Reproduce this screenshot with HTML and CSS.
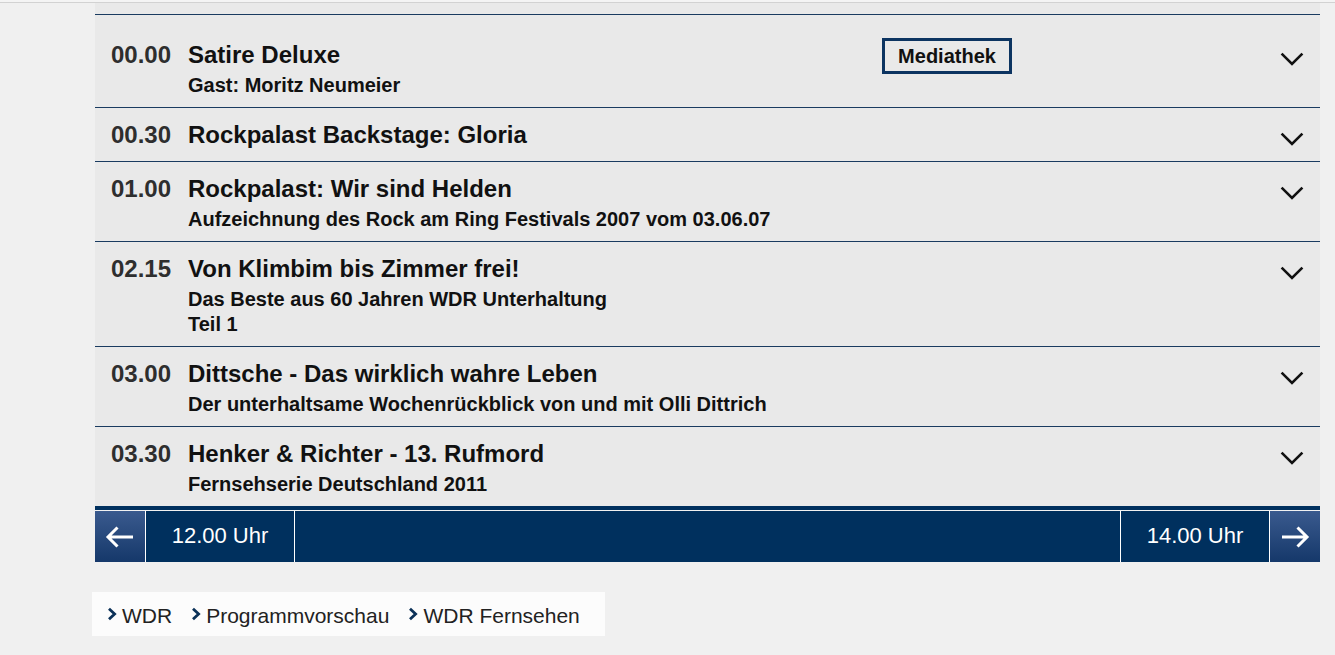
FILE: index.html
```html
<!DOCTYPE html>
<html lang="de">
<head>
<meta charset="utf-8">
<title>WDR Fernsehen – Programmvorschau</title>
<link rel="stylesheet" href="styles.css">
</head>
<body>
<div class="topline"></div>
<main class="page">
  <div class="prev"></div>
  <ul class="schedule">
    <li class="item">
      <span class="time">00.00</span>
      <div class="info">
        <div class="title">Satire Deluxe</div>
        <div class="sub">Gast: Moritz Neumeier</div>
      </div>
      <div class="media"><a class="mediathek" href="#">Mediathek</a></div>
      <div class="toggle"><svg class="chev" width="24" height="14" viewBox="0 0 24 14"><path d="M1.6 1.6 L12 12 L22.4 1.6"/></svg></div>
    </li>
    <li class="item">
      <span class="time">00.30</span>
      <div class="info">
        <div class="title">Rockpalast Backstage: Gloria</div>
      </div>
      <div class="toggle"><svg class="chev" width="24" height="14" viewBox="0 0 24 14"><path d="M1.6 1.6 L12 12 L22.4 1.6"/></svg></div>
    </li>
    <li class="item">
      <span class="time">01.00</span>
      <div class="info">
        <div class="title">Rockpalast: Wir sind Helden</div>
        <div class="sub">Aufzeichnung des Rock am Ring Festivals 2007 vom 03.06.07</div>
      </div>
      <div class="toggle"><svg class="chev" width="24" height="14" viewBox="0 0 24 14"><path d="M1.6 1.6 L12 12 L22.4 1.6"/></svg></div>
    </li>
    <li class="item">
      <span class="time">02.15</span>
      <div class="info">
        <div class="title">Von Klimbim bis Zimmer frei!</div>
        <div class="sub">Das Beste aus 60 Jahren WDR Unterhaltung<br>Teil 1</div>
      </div>
      <div class="toggle"><svg class="chev" width="24" height="14" viewBox="0 0 24 14"><path d="M1.6 1.6 L12 12 L22.4 1.6"/></svg></div>
    </li>
    <li class="item">
      <span class="time">03.00</span>
      <div class="info">
        <div class="title">Dittsche - Das wirklich wahre Leben</div>
        <div class="sub">Der unterhaltsame Wochenrückblick von und mit Olli Dittrich</div>
      </div>
      <div class="toggle"><svg class="chev" width="24" height="14" viewBox="0 0 24 14"><path d="M1.6 1.6 L12 12 L22.4 1.6"/></svg></div>
    </li>
    <li class="item last">
      <span class="time">03.30</span>
      <div class="info">
        <div class="title">Henker &amp; Richter - 13. Rufmord</div>
        <div class="sub">Fernsehserie Deutschland 2011</div>
      </div>
      <div class="toggle"><svg class="chev" width="24" height="14" viewBox="0 0 24 14"><path d="M1.6 1.6 L12 12 L22.4 1.6"/></svg></div>
    </li>
  </ul>
  <nav class="timenav">
    <a class="nav-arrow" href="#"><svg width="30" height="24" viewBox="0 0 30 24"><path d="M28 12 H3 M12.5 2.5 L3 12 L12.5 21.5"/></svg></a>
    <a class="nav-time" href="#">12.00 Uhr</a>
    <div class="nav-mid"></div>
    <a class="nav-time" href="#">14.00 Uhr</a>
    <a class="nav-arrow" href="#"><svg width="30" height="24" viewBox="0 0 30 24"><path d="M2 12 H27 M17.5 2.5 L27 12 L17.5 21.5"/></svg></a>
  </nav>
  <div class="crumbs">
    <a class="crumb" href="#"><svg width="10" height="14" viewBox="0 0 10 14"><path d="M2 1.8 L7.6 7 L2 12.2"/></svg>WDR</a>
    <a class="crumb" href="#"><svg width="10" height="14" viewBox="0 0 10 14"><path d="M2 1.8 L7.6 7 L2 12.2"/></svg>Programmvorschau</a>
    <a class="crumb" href="#"><svg width="10" height="14" viewBox="0 0 10 14"><path d="M2 1.8 L7.6 7 L2 12.2"/></svg>WDR Fernsehen</a>
  </div>
</main>
</body>
</html>
```

FILE: styles.css
```css
html, body {
  margin: 0;
  padding: 0;
}
body {
  background: #f0f0f0;
  font-family: "Liberation Sans", Arial, sans-serif;
  color: #111;
  height: 655px;
  overflow: hidden;
}
.topline {
  height: 2px;
  border-bottom: 1px solid #d2d2d2;
  background: #f4f4f4;
}
.page {
  width: 1225px;
  margin-left: 95px;
}
.prev {
  height: 11px;
  background: #e9e9e9;
}
.schedule {
  list-style: none;
  margin: 0;
  padding: 0;
  background: #e9e9e9;
}
.item {
  display: grid;
  grid-template-columns: 93px 694px 1fr 56px;
  align-items: baseline;
  border-top: 1px solid #1a3b60;
  padding: 12px 0 11px;
}
.item.last {
  border-bottom: 4px solid #00305e;
}
.time {
  padding-left: 16px;
  font-size: 24px;
  line-height: 30px;
  font-weight: bold;
  color: #2e2e2e;
}
.title {
  font-size: 24px;
  line-height: 30px;
  font-weight: bold;
  color: #111;
}
.sub {
  margin-top: 3px;
  margin-bottom: -2px;
  font-size: 20px;
  line-height: 25px;
  font-weight: bold;
  color: #111;
}
.media {
  grid-column: 3;
}
.mediathek {
  display: inline-block;
  margin-top: 11px;
  border: 3px solid #0c3461;
  padding: 4px 0;
  width: 124px;
  text-align: center;
  font-size: 20px;
  line-height: 22px;
  font-weight: bold;
  color: #111;
  text-decoration: none;
}
.toggle {
  grid-column: 4;
  font-size: 24px;
  line-height: 30px;
  text-align: center;
}
.chev {
  vertical-align: -3px;
}
.chev path {
  fill: none;
  stroke: #111;
  stroke-width: 2.6;
}
.timenav {
  display: flex;
  height: 51px;
  border-top: 1px solid #f2f2f2;
  background: #00305e;
}
.nav-arrow {
  width: 50px;
  display: flex;
  align-items: center;
  justify-content: center;
  background: linear-gradient(#3a5a8e, #15386a);
}
.nav-arrow path {
  fill: none;
  stroke: #fff;
  stroke-width: 3;
}
.nav-time {
  width: 148px;
  border-left: 1px solid #fff;
  border-right: 1px solid #fff;
  display: flex;
  align-items: center;
  justify-content: center;
  padding-bottom: 1px;
  box-sizing: content-box;
  font-size: 22px;
  color: #fff;
  text-decoration: none;
}
.nav-mid {
  flex: 1;
}
.crumbs {
  display: inline-flex;
  align-items: center;
  gap: 19px;
  margin: 30px 0 0 -3px;
  height: 44px;
  box-sizing: border-box;
  padding: 3px 25px 0 15px;
  background: #fcfcfc;
}
.crumb {
  display: flex;
  align-items: center;
  gap: 5px;
  font-size: 21px;
  color: #222;
  text-decoration: none;
}
.crumb svg {
  margin-top: -4px;
}
.crumb path {
  fill: none;
  stroke: #0b3158;
  stroke-width: 2.8;
}
```
